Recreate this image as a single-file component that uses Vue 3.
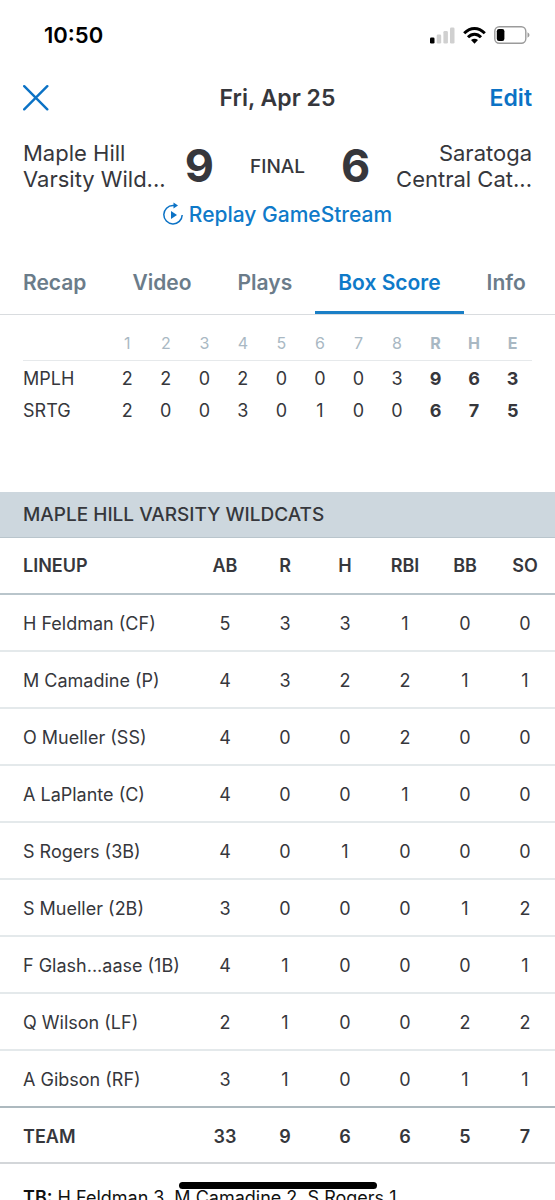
<script setup>
import { ref } from 'vue'

const tabs = ['Recap', 'Video', 'Plays', 'Box Score', 'Info']
const activeTab = ref('Box Score')

const innings = [1, 2, 3, 4, 5, 6, 7, 8]
const lineScore = [
  { team: 'MPLH', runs: [2, 2, 0, 2, 0, 0, 0, 3], totals: [9, 6, 3] },
  { team: 'SRTG', runs: [2, 0, 0, 3, 0, 1, 0, 0], totals: [6, 7, 5] },
]

const statCols = ['AB', 'R', 'H', 'RBI', 'BB', 'SO']
const lineup = [
  { name: 'H Feldman (CF)', stats: [5, 3, 3, 1, 0, 0] },
  { name: 'M Camadine (P)', stats: [4, 3, 2, 2, 1, 1] },
  { name: 'O Mueller (SS)', stats: [4, 0, 0, 2, 0, 0] },
  { name: 'A LaPlante (C)', stats: [4, 0, 0, 1, 0, 0] },
  { name: 'S Rogers (3B)', stats: [4, 0, 1, 0, 0, 0] },
  { name: 'S Mueller (2B)', stats: [3, 0, 0, 0, 1, 2] },
  { name: 'F Glash...aase (1B)', stats: [4, 1, 0, 0, 0, 1] },
  { name: 'Q Wilson (LF)', stats: [2, 1, 0, 0, 2, 2] },
  { name: 'A Gibson (RF)', stats: [3, 1, 0, 0, 1, 1] },
]
const teamTotals = [33, 9, 6, 6, 5, 7]
</script>

<template>
  <div class="screen">
    <div class="status">
      <span class="status__time">10:50</span>
      <div class="status__icons">
        <svg width="25" height="17" viewBox="0 0 25 17">
          <rect x="0" y="10.500" width="4.500" height="6" rx="1.300" fill="#000" />
          <rect x="6.700" y="7.500" width="4.500" height="9" rx="1.300" fill="#d0d0d0" />
          <rect x="13.400" y="4" width="4.500" height="12.500" rx="1.300" fill="#d0d0d0" />
          <rect x="20" y="0.500" width="4.500" height="16" rx="1.300" fill="#d0d0d0" />
        </svg>
        <svg width="23" height="17" viewBox="0 0 23 17">
          <g fill="none" stroke="#000" stroke-width="3">
            <path d="M1.200 6.200Q6 1.500 11.500 1.500T21.800 6.200" />
            <path d="M5 10.200Q8 7.200 11.500 7.200T18 10.200" />
          </g>
          <path d="M8 13Q11.500 10.300 15 13L11.500 16.700Z" fill="#000" />
        </svg>
        <svg width="36" height="18" viewBox="0 0 36 18">
          <rect x="0.800" y="0.800" width="31" height="16.400" rx="4.500" fill="none" stroke="#9b9b9b" stroke-width="1.400" />
          <rect x="2.800" y="3" width="7.600" height="12" rx="2.200" fill="#000" />
          <path d="M33.500 6.300Q35.500 7.300 35.500 9T33.500 11.700Z" fill="#9b9b9b" />
        </svg>
      </div>
    </div>

    <header class="header">
      <button type="button" class="header__close" aria-label="Close">
        <svg width="26" height="26" viewBox="0 0 26 26">
          <path d="M1.200 1.200L24.300 24.300M24.300 1.200L1.200 24.300" stroke="#0b72c5" stroke-width="2.400" stroke-linecap="round" />
        </svg>
      </button>
      <h1 class="header__title">Fri, Apr 25</h1>
      <button type="button" class="header__edit">Edit</button>
    </header>

    <section class="matchup">
      <div class="matchup__team">Maple Hill<br />Varsity Wild...</div>
      <div class="matchup__score">9</div>
      <div class="matchup__state">FINAL</div>
      <div class="matchup__score">6</div>
      <div class="matchup__team matchup__team--away">Saratoga<br />Central Cat...</div>
    </section>

    <a href="#" class="replay">
      <svg width="21" height="24" viewBox="0 0 21 24">
        <path d="M12 3.500H10A9.200 9.200 0 1 0 19.200 13" fill="none" stroke="#0b72c5" stroke-width="1.500" />
        <path d="M10.500 0.500L15 3.500L10.500 6.500Z" fill="#0b72c5" />
        <path d="M8 9V17L14 13Z" fill="#0b72c5" />
      </svg>
      <span>Replay GameStream</span>
    </a>

    <nav class="tabs">
      <button
        v-for="t in tabs"
        :key="t"
        type="button"
        class="tab"
        :class="{ 'tab--active': t === activeTab }"
        @click="activeTab = t"
      >
        {{ t }}
      </button>
    </nav>

    <div class="linescore">
      <table class="linescore__table">
        <thead>
          <tr>
            <th class="linescore__team"></th>
            <th v-for="i in innings" :key="i">{{ i }}</th>
            <th class="strong">R</th>
            <th class="strong">H</th>
            <th class="strong">E</th>
          </tr>
        </thead>
        <tbody>
          <tr v-for="row in lineScore" :key="row.team">
            <td class="linescore__team">{{ row.team }}</td>
            <td v-for="(r, i) in row.runs" :key="i">{{ r }}</td>
            <td v-for="(r, i) in row.totals" :key="'t' + i" class="strong">{{ r }}</td>
          </tr>
        </tbody>
      </table>
    </div>

    <h2 class="band">MAPLE HILL VARSITY WILDCATS</h2>
    <table class="box">
      <thead>
        <tr>
          <th class="box__name">LINEUP</th>
          <th v-for="c in statCols" :key="c">{{ c }}</th>
        </tr>
      </thead>
      <tbody>
        <tr v-for="p in lineup" :key="p.name">
          <td class="box__name">{{ p.name }}</td>
          <td v-for="(s, i) in p.stats" :key="i">{{ s }}</td>
        </tr>
      </tbody>
      <tfoot>
        <tr>
          <td class="box__name">TEAM</td>
          <td v-for="(s, i) in teamTotals" :key="i">{{ s }}</td>
        </tr>
      </tfoot>
    </table>
    <p class="notes"><b>TB:</b> H Feldman 3, M Camadine 2, S Rogers 1</p>

    <div class="home-bar"></div>
  </div>
</template>

<style>
body {
  margin: 0;
  background: #fff;
}
</style>

<style scoped>
.screen {
  position: relative;
  height: 100vh;
  overflow: hidden;
  background: #fff;
  color: #36373c;
  font-family: Inter, "Liberation Sans", sans-serif;
  font-size: 18px;
}
button {
  padding: 0;
  border: none;
  background: transparent;
  font: inherit;
  cursor: pointer;
}
svg {
  display: block;
}
table {
  width: 100%;
  border-collapse: separate;
  border-spacing: 0;
  table-layout: fixed;
}
th,
td {
  box-sizing: border-box;
  padding: 0;
  text-align: center;
}
td {
  padding-top: 2px;
}
.status {
  display: flex;
  align-items: center;
  justify-content: space-between;
  height: 70px;
  padding: 0 25px 0 44px;
}
.status__time {
  color: #000;
  font-size: 22px;
  font-weight: 600;
}
.status__icons {
  display: flex;
  align-items: center;
  gap: 8px;
}
.header {
  display: grid;
  grid-template-columns: 1fr auto 1fr;
  align-items: center;
  height: 56px;
  padding: 0 23px;
}
.header__close {
  justify-self: start;
}
.header__title {
  margin: 0;
  font-size: 23px;
  font-weight: 600;
}
.header__edit {
  justify-self: end;
  color: #0b72c5;
  font-size: 23px;
  font-weight: 600;
}
.matchup {
  display: flex;
  align-items: center;
  gap: 36px;
  padding: 14px 23px 0;
}
.matchup__team {
  flex: 1 1 0;
  min-width: 0;
  font-size: 22px;
  line-height: 26px;
  white-space: nowrap;
}
.matchup__team--away {
  display: flex;
  justify-content: flex-end;
  text-align: right;
}
.matchup__score {
  font-size: 45px;
  line-height: 52px;
  font-weight: 700;
}
.matchup__state {
  font-size: 19px;
  font-weight: 500;
}
.replay {
  display: flex;
  align-items: center;
  justify-content: center;
  gap: 5px;
  height: 44px;
  color: #0f7ac9;
  font-size: 21px;
  font-weight: 500;
  text-decoration: none;
}
.tabs {
  display: flex;
  height: 78px;
  border-bottom: 1px solid #d9dcdf;
}
.tab {
  flex: none;
  height: 78px;
  padding: 18px 23px 0;
  border-bottom: 3px solid transparent;
  color: #6b7c8a;
  font-size: 21px;
  font-weight: 600;
  white-space: nowrap;
}
.tab--active {
  border-bottom-color: #1a7fc6;
  color: #0f7ac9;
}
.linescore {
  padding: 12px 23px 67px;
}
.linescore__table th {
  height: 34px;
  padding-bottom: 2px;
  border-bottom: 1px solid #e6e9eb;
  color: #a9b8c3;
  font-size: 16px;
  font-weight: 400;
}
.linescore__table td {
  height: 32px;
}
.linescore__table .linescore__team {
  width: 85px;
  text-align: left;
}
.linescore__table .strong {
  font-weight: 700;
}
.band {
  margin: 0;
  padding: 0 23px;
  border-bottom: 1px solid #b9c5cc;
  background: #cdd7de;
  font-size: 19px;
  line-height: 45px;
  font-weight: 500;
}
.box th {
  width: 60px;
  height: 57px;
  border-bottom: 2px solid #b9c5cb;
  font-weight: 600;
}
.box td {
  height: 57px;
  border-bottom: 2px solid #e4e9eb;
}
.box .box__name {
  width: auto;
  padding-left: 23px;
  text-align: left;
}
.box tbody tr:last-child td {
  border-bottom-color: #adb9bf;
}
.box tfoot td {
  height: 56px;
  border-bottom-color: #d3d6d9;
  font-weight: 600;
}
.notes {
  margin: 0;
  padding: 22px 23px;
  color: #111;
  line-height: 24px;
}
.notes b {
  font-weight: 600;
}
.home-bar {
  position: absolute;
  bottom: 11px;
  left: 50%;
  width: 198px;
  height: 7px;
  border-radius: 4px;
  background: #000;
  transform: translateX(-50%);
}
</style>
